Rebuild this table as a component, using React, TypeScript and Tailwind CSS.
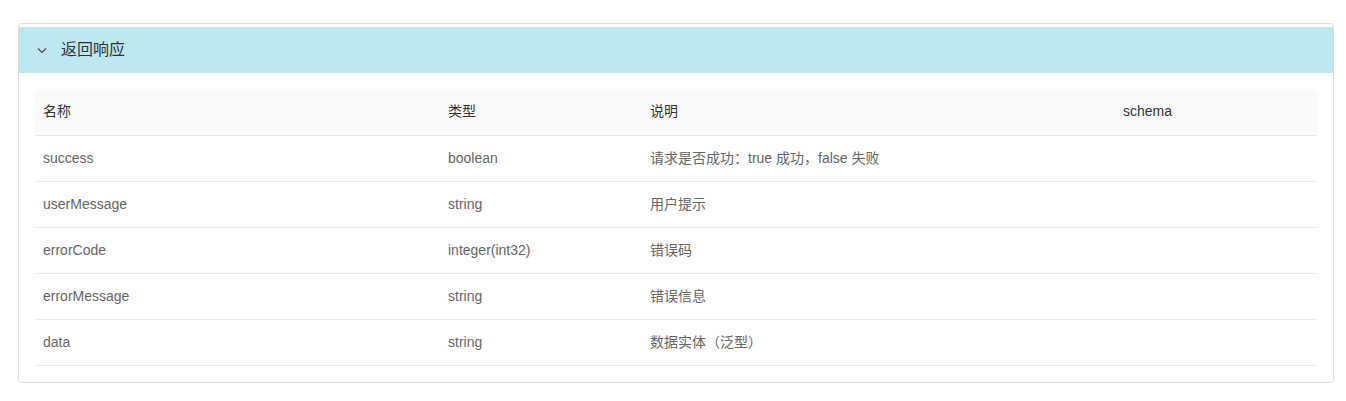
const rows = [
  { name: "success", type: "boolean", desc: "请求是否成功：true 成功，false 失败", schema: "" },
  { name: "userMessage", type: "string", desc: "用户提示", schema: "" },
  { name: "errorCode", type: "integer(int32)", desc: "错误码", schema: "" },
  { name: "errorMessage", type: "string", desc: "错误信息", schema: "" },
  { name: "data", type: "string", desc: "数据实体（泛型）", schema: "" },
];

const font = { fontFamily: '"Liberation Sans", "Noto Sans CJK SC", sans-serif' };

export default function App() {
  return (
    <div className="min-h-[401px] bg-white px-[18px] pt-[23px] pb-[18px]" style={font}>
      <div className="w-[1316px] rounded-[4px] border border-[#dcdcdc] pt-[3px] pb-4">
        {/* Header */}
        <div className="flex h-[46px] items-center bg-[#bde8f0] pl-[17px] text-[16px] text-[#333]">
          <svg width="12" height="12" viewBox="0 0 12 12" className="mr-[13px]">
            <path d="M2 4.5 L6 8.5 L10 4.5" fill="none" stroke="#444" strokeWidth="1.1" />
          </svg>
          <span>返回响应</span>
        </div>

        {/* Table */}
        <div className="px-4 pt-4">
          <table className="w-full table-fixed border-collapse text-[14px]">
            <colgroup>
              <col className="w-[405px]" />
              <col className="w-[202px]" />
              <col className="w-[473px]" />
              <col />
            </colgroup>
            <thead>
              <tr className="h-[46px] border-b border-[#e8e8e8] bg-[#fafafa] text-left text-[#333]">
                <th className="rounded-tl-[4px] px-2 font-normal">名称</th>
                <th className="px-2 font-normal">类型</th>
                <th className="px-2 font-normal">说明</th>
                <th className="rounded-tr-[4px] px-2 font-normal">schema</th>
              </tr>
            </thead>
            <tbody className="text-[#666]">
              {rows.map((r) => (
                <tr key={r.name} className="h-[46px] border-b border-[#e8e8e8]">
                  <td className="px-2">{r.name}</td>
                  <td className="px-2">{r.type}</td>
                  <td className="px-2">{r.desc}</td>
                  <td className="px-2">{r.schema}</td>
                </tr>
              ))}
            </tbody>
          </table>
        </div>
      </div>
    </div>
  );
}
